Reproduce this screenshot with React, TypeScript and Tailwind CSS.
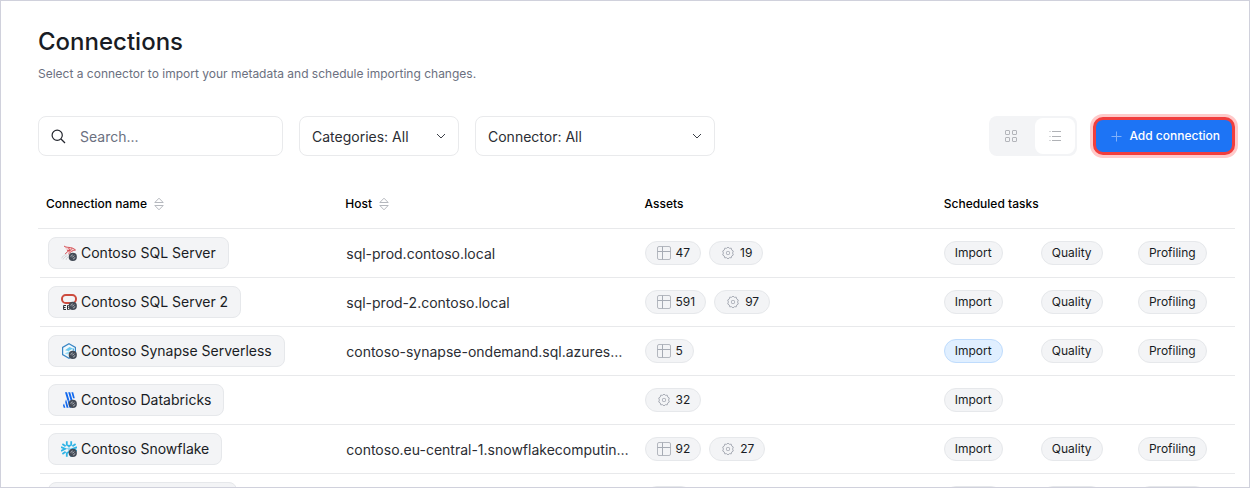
import React, { useState } from "react";

type Task = "Import" | "Quality" | "Profiling";

type Connection = {
  id: string;
  name: string;
  icon: React.ReactNode;
  host?: string;
  tables?: number;
  processes?: number;
  tasks: Task[];
  running?: Task;
};

const SettingsBadge = () => (
  <>
    <circle cx="11.800" cy="11.900" r="4.100" fill="#434a55" />
    <path d="M9.800 11.800a2 2 0 0 1 2-1.900M13.900 12.200a2 2 0 0 1-2 1.800" stroke="#aeb4bc" strokeWidth="0.900" fill="none" />
    <path d="m11.300 12.400 1.800-1.800" stroke="#d5d8dc" strokeWidth="0.900" fill="none" />
  </>
);

const SqlServerIcon = () => (
  <svg width="16" height="16" viewBox="0 0 16 16" fill="none" aria-hidden="true">
    <path d="M3 1 7 2l4.500.6L15 5l-3.600 1.500L9 8.200 6.300 8 4.200 9.400l2-3.400L3 1Z" fill="#f1cfd1" />
    <path d="M3 1c1.500 1.200 3 1.200 4.800 1.400 2.200.2 4.700.7 6.700 2.600-3.200.3-5 2-7.300 4.200M7.500 2.700 9 5.800 6 5.300M11 3.300 9 5.800M4.300 9c1.200-2 3-3.200 4.700-3.200" stroke="#d2474d" strokeWidth="0.900" />
    <path d="M5.500 9.300C3 10.200 1 11.500.8 13.400M2 14.500c1-2 2.400-3.200 4.500-3.800M5 15c.2-1.400 1-2.300 2-3" stroke="#c9cbd0" strokeWidth="0.800" />
    <SettingsBadge />
  </svg>
);

const OracleEbsIcon = () => (
  <svg width="16" height="16" viewBox="0 0 16 16" fill="none" aria-hidden="true">
    <rect x="1" y="1" width="14" height="8" rx="3.800" stroke="#cc4b3e" strokeWidth="2" />
    <path d="M5 11.500H2.600v4H5M2.600 13.500h2M6.500 11.500v4h1.200c1.700 0 1.700-2 0-2 1.500 0 1.500-2 0-2H6.500Z" stroke="#2a2c31" strokeWidth="1" />
    <SettingsBadge />
  </svg>
);

const SynapseIcon = () => (
  <svg width="16" height="16" viewBox="0 0 16 16" fill="none" aria-hidden="true">
    <path d="M8 .8 14.400 4.400v7.200L8 15.200 1.600 11.600V4.400L8 .8Z" fill="#f2f9fd" stroke="#3a86c4" strokeWidth="1.200" />
    <path d="M4 7.200 8.500 4l3.500 1.500L7.500 8 4 7.200Z" fill="#6cc9ee" />
    <path d="M3.800 10.500 8 8.200l1 1.600-2.500 1.700-2.700-1Z" fill="#9adcf5" />
    <path d="M12.300 5.500v2.200" stroke="#35a6de" strokeWidth="1.200" />
    <SettingsBadge />
  </svg>
);

const DatabricksIcon = () => (
  <svg width="16" height="16" viewBox="0 0 16 16" fill="none" aria-hidden="true">
    <path
      d="M4 .3h2l2.500 8.400h-2L4 .3ZM7.200.3h2l2.500 8.400h-2L7.200.3ZM10.400.3h1.800l1.600 6h-1.700L10.400.3ZM5 7.200l2.600 8.500h-2L4.200 10 5 7.200ZM8.300 8.500l2 7.200h-1.800l-1.800-6.200 1.600-1ZM3 11.500l1.400 4.200H2.700L2 13.200l1-1.700Z"
      fill="#1269ee"
    />
    <SettingsBadge />
  </svg>
);

const SnowflakeIcon = () => (
  <svg width="16" height="16" viewBox="0 0 16 16" fill="none" aria-hidden="true">
    <g stroke="#2fb4e6" strokeWidth="1.800">
      <path d="M5.800.3v3.400L8 5.200l2.200-1.500V.3" />
      <path d="M5.800 15.700v-3.400L8 10.800l2.200 1.500v3.400" />
      <path d="M1.400 3 4.600 5.200M0 6l4.200 1.800L0 10M1.400 13l3.200-2.200" />
      <path d="M14.600 3l-3.200 2.200M16 6.200l-4.200 1.600L16 10" />
    </g>
    <path d="M8 6.600 9.400 8 8 9.400 6.600 8 8 6.600Z" stroke="#2fb4e6" strokeWidth="0.800" />
    <SettingsBadge />
  </svg>
);

const TableIcon = () => (
  <svg width="14" height="14" viewBox="0 0 14 14" fill="none" stroke="#b4b8bf" aria-hidden="true">
    <rect x="0.5" y="0.5" width="13" height="13" rx="1.500" />
    <path d="M5.500.5v13M.5 5.500h13" stroke="#a6abb4" />
  </svg>
);

const GearIcon = () => (
  <svg width="14" height="14" viewBox="0 0 14 14" fill="none" stroke="#a9adb6" aria-hidden="true">
    <path d="M5.600 2.300 7 1.100l1.400 1.200 1.900-.1.400 1.800 1.600 1-.7 2 .7 2-1.600 1-.4 1.800-1.900-.1L7 12.900l-1.400-1.200-1.900.1-.4-1.800-1.600-1 .7-2-.7-2 1.600-1 .4-1.800 1.900.1Z" strokeLinejoin="round" />
    <rect x="5.500" y="5.500" width="3" height="3" rx="0.800" />
  </svg>
);

const SortIcon = () => (
  <svg width="10" height="14" viewBox="0 0 10 14" fill="none" stroke="#b5b8be" aria-hidden="true">
    <path d="M.8 5.500 5 1.200l4.200 4.300H.8ZM.8 8.500 5 12.800l4.200-4.300H.8Z" strokeLinejoin="round" />
  </svg>
);

const ChevronIcon = () => (
  <svg
    className="pointer-events-none absolute right-[13px] top-[17px]"
    width="10"
    height="7"
    viewBox="0 0 10 7"
    fill="none"
    stroke="#3b3f47"
    aria-hidden="true"
  >
    <path d="m1 1 4 4 4-4" />
  </svg>
);

const connections: Connection[] = [
  { id: "sql", name: "Contoso SQL Server", icon: <SqlServerIcon />, host: "sql-prod.contoso.local", tables: 47, processes: 19, tasks: ["Import", "Quality", "Profiling"] },
  { id: "sql2", name: "Contoso SQL Server 2", icon: <OracleEbsIcon />, host: "sql-prod-2.contoso.local", tables: 591, processes: 97, tasks: ["Import", "Quality", "Profiling"] },
  { id: "synapse", name: "Contoso Synapse Serverless", icon: <SynapseIcon />, host: "contoso-synapse-ondemand.sql.azures…", tables: 5, tasks: ["Import", "Quality", "Profiling"], running: "Import" },
  { id: "databricks", name: "Contoso Databricks", icon: <DatabricksIcon />, processes: 32, tasks: ["Import"] },
  { id: "snowflake", name: "Contoso Snowflake", icon: <SnowflakeIcon />, host: "contoso.eu-central-1.snowflakecomputin…", tables: 92, processes: 27, tasks: ["Import", "Quality", "Profiling"] },
];

const FilterSelect = ({ label, className }: { label: string; className: string }) => (
  <div className={`relative ${className}`}>
    <select
      aria-label={label}
      className="h-10 w-full appearance-none rounded-lg border border-[#e9eaec] bg-white px-3 pt-0.5 text-sm text-[#2b2d33]"
    >
      <option>{label}: All</option>
    </select>
    <ChevronIcon />
  </div>
);

const AssetPill = ({ icon, count }: { icon: React.ReactNode; count: number }) => (
  <span className="flex h-6 items-center gap-[5px] rounded-full border border-[#e6e8eb] bg-[#f3f4f6] pr-2.5 pl-[11px] text-xs">
    {icon}
    {count}
  </span>
);

const TaskPill = ({ task, running }: { task: Task; running: boolean }) => (
  <button
    type="button"
    className={`h-6 justify-self-start rounded-full border px-2.5 text-xs ${
      running ? "border-[#bfdcfd] bg-[#e0efff]" : "border-[#e6e8eb] bg-[#f3f4f6]"
    }`}
  >
    {task}
  </button>
);

const ConnectionRow = ({ connection }: { connection: Connection }) => (
  <tr>
    <td className="p-0">
      <div className="ml-0.5 flex h-[49px] items-center border-b border-[#e8e9eb] px-2">
        <button
          type="button"
          className="flex h-8 items-center gap-1 rounded-lg border border-[#e6e8eb] bg-[#f3f4f6] px-3 text-sm whitespace-nowrap"
        >
          {connection.icon}
          {connection.name}
        </button>
      </div>
    </td>
    <td className="p-0">
      <div className="flex h-[49px] items-center border-b border-[#e8e9eb] pt-0.5 pr-[7px] pl-[9px] text-sm text-[#2b2d33]">
        <span className="truncate">{connection.host}</span>
      </div>
    </td>
    <td className="p-0">
      <div className="flex h-[49px] items-center gap-2 border-b border-[#e8e9eb] px-2">
        {connection.tables && <AssetPill icon={<TableIcon />} count={connection.tables} />}
        {connection.processes && <AssetPill icon={<GearIcon />} count={connection.processes} />}
      </div>
    </td>
    <td className="p-0">
      <div className="grid h-[49px] grid-cols-3 items-center border-b border-[#e8e9eb] pl-2">
        {connection.tasks.map((task) => (
          <TaskPill key={task} task={task} running={task === connection.running} />
        ))}
      </div>
    </td>
  </tr>
);

const LoadingRow = () => (
  <tr aria-hidden="true">
    <td className="p-0">
      <div className="ml-0.5 flex h-12 items-center px-2">
        <div className="h-8 w-[189px] rounded-lg border border-[#e6e8eb] bg-[#f3f4f6]" />
      </div>
    </td>
    <td className="p-0" />
    <td className="p-0">
      <div className="flex h-12 items-center px-2">
        <div className="h-6 w-12 rounded-full border border-[#e6e8eb] bg-[#f3f4f6]" />
      </div>
    </td>
    <td className="p-0">
      <div className="grid h-12 grid-cols-3 items-center pl-2">
        <div className="h-6 w-[59px] rounded-full border border-[#e6e8eb] bg-[#f3f4f6]" />
        <div className="h-6 w-[62px] rounded-full border border-[#e6e8eb] bg-[#f3f4f6]" />
        <div className="h-6 w-[69px] rounded-full border border-[#e6e8eb] bg-[#f3f4f6]" />
      </div>
    </td>
  </tr>
);

export default function App() {
  const [view, setView] = useState<"grid" | "list">("list");

  return (
    <main className="h-screen overflow-hidden border border-[#d0d1dc] bg-white pt-[25px] pr-3.5 pl-[37px] font-['Inter',sans-serif] text-[#191c24]">
      <h1 className="text-2xl font-medium">Connections</h1>
      <p className="mt-2 text-xs text-[#6b7080]">
        Select a connector to import your metadata and schedule importing changes.
      </p>

      <div className="mt-[34px] flex items-center gap-4">
        <label className="flex h-10 w-[245px] items-center gap-3.5 rounded-lg border border-[#e9eaec] px-3">
          <svg className="shrink-0" width="15" height="15" viewBox="0 0 15 15" fill="none" stroke="#23262e" strokeWidth="1.200" aria-hidden="true">
            <circle cx="6.200" cy="6.200" r="5.100" />
            <path d="m10 10 4 4" />
          </svg>
          <input
            type="search"
            aria-label="Search connections"
            placeholder="Search..."
            className="w-full min-w-0 pt-0.5 text-sm outline-none placeholder:text-[#6b7080]"
          />
        </label>
        <FilterSelect label="Categories" className="w-40" />
        <FilterSelect label="Connector" className="w-60" />

        <div className="ml-auto flex h-10 w-[88px] justify-between rounded-lg bg-[#f3f4f6] p-0.5">
          <button
            type="button"
            aria-label="Grid view"
            onClick={() => setView("grid")}
            className={`flex w-10 items-center justify-center rounded-lg ${view === "grid" ? "bg-white" : ""}`}
          >
            <svg width="12" height="12" viewBox="0 0 12 12" fill="none" stroke="#b3b5ba">
              <rect x="0.5" y="0.5" width="4" height="4" rx="0.5" />
              <rect x="7.500" y="0.5" width="4" height="4" rx="0.5" />
              <rect x="0.5" y="7.500" width="4" height="4" rx="0.5" />
              <rect x="7.500" y="7.500" width="4" height="4" rx="0.5" />
            </svg>
          </button>
          <button
            type="button"
            aria-label="List view"
            onClick={() => setView("list")}
            className={`flex w-10 items-center justify-center rounded-lg ${view === "list" ? "bg-white" : ""}`}
          >
            <svg width="12" height="12" viewBox="0 0 12 12" fill="none" stroke="#b0b2b6">
              <path d="M.5 1.500h1M.5 6.500h1M.5 10.500h1M3 1.500h9M3 6.500h9M3 10.500h9" />
            </svg>
          </button>
        </div>

        <button
          type="button"
          className="flex h-[38px] items-center gap-[5px] rounded-[10px] border-3 border-[#f03e3e] bg-[#1d74f5] px-3 text-xs font-medium whitespace-nowrap text-white ring-3 ring-[#ffc9c9]"
        >
          <svg width="16" height="16" viewBox="0 0 16 16" fill="none" stroke="#80b1fa" aria-hidden="true">
            <path d="M8.500 3.500v10M3.500 8.500h10" />
          </svg>
          Add connection
        </button>
      </div>

      <table className="mt-6 w-full table-fixed border-separate border-spacing-0">
        <thead>
          <tr className="h-[49px] text-left text-xs text-black">
            <th className="border-b border-[#e8e9eb] px-2 py-0 font-medium">
              <span className="flex items-center gap-[7px]">Connection name <SortIcon /></span>
            </th>
            <th className="border-b border-[#e8e9eb] px-2 py-0 font-medium">
              <span className="flex items-center gap-[7px]">Host <SortIcon /></span>
            </th>
            <th className="border-b border-[#e8e9eb] px-2 py-0 font-medium">Assets</th>
            <th className="border-b border-[#e8e9eb] px-2 py-0 font-medium">Scheduled tasks</th>
          </tr>
        </thead>
        <tbody>
          {connections.map((connection) => (
            <ConnectionRow key={connection.id} connection={connection} />
          ))}
          <LoadingRow />
        </tbody>
      </table>
    </main>
  );
}
